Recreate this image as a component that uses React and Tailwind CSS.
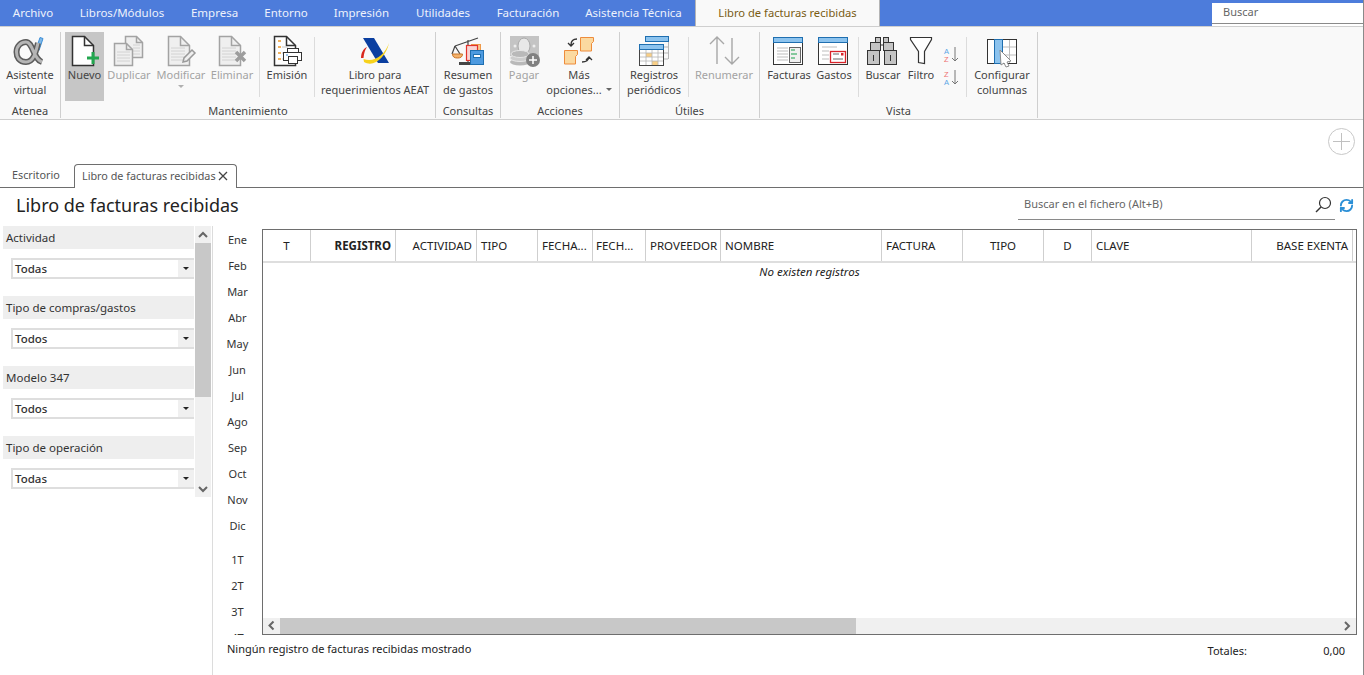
import { RefreshCw } from "lucide-react";

const topTabs = [
  ["Archivo", "w-[66px]"],
  ["Libros/Módulos", "w-[112px]"],
  ["Empresa", "w-[73px]"],
  ["Entorno", "w-[70px]"],
  ["Impresión", "w-[81px]"],
  ["Utilidades", "w-[82px]"],
  ["Facturación", "w-[88px]"],
  ["Asistencia Técnica", "w-[123px]"],
];

const filters = [
  ["Actividad", "Todas"],
  ["Tipo de compras/gastos", "Todos"],
  ["Modelo 347", "Todos"],
  ["Tipo de operación", "Todas"],
];

const months = ["Ene", "Feb", "Mar", "Abr", "May", "Jun", "Jul", "Ago", "Sep", "Oct", "Nov", "Dic"];
const quarters = ["1T", "2T", "3T", "4T"];

const columns = [
  ["T", "w-[48px] justify-center"],
  ["REGISTRO", "w-[85px] justify-end pr-[4px] font-bold"],
  ["ACTIVIDAD", "w-[81px] justify-end pr-[4px]"],
  ["TIPO", "w-[61px] pl-[4px]"],
  ["FECHA...", "w-[55px] pl-[4px]"],
  ["FECH...", "w-[53px] pl-[3px]"],
  ["PROVEEDOR", "w-[75px] pl-[4px]"],
  ["NOMBRE", "w-[161px] pl-[4px]"],
  ["FACTURA", "w-[81px] pl-[4px]"],
  ["TIPO", "w-[81px] justify-center"],
  ["D", "w-[48px] justify-center"],
  ["CLAVE", "w-[160px] pl-[4px]"],
  ["BASE EXENTA", "w-[101px] justify-end pr-[4px]"],
];

// el svg usa coordenadas de pantalla, asi es mas facil colocar cada trazo
function Ico({ x, w, children }) {
  return (
    <svg width={w} height={36} viewBox={`${x} 32 ${w} 36`} className="block overflow-visible">
      {children}
    </svg>
  );
}

function Doc({ x, y, w, h, f = 9, stroke = "#a3a3a3", fill = "#efefef", sw = 1.5 }) {
  return (
    <>
      <path d={`M${x} ${y}H${x + w - f}L${x + w} ${y + f}V${y + h}H${x}Z`} fill={fill} stroke={stroke} strokeWidth={sw} />
      <path d={`M${x + w - f} ${y}V${y + f}H${x + w}`} fill="none" stroke={stroke} strokeWidth={sw} />
    </>
  );
}

function DocLines({ x, w, ys, color = "#d2d2d2" }) {
  return ys.map((y) => <path key={y} d={`M${x} ${y}h${w}`} stroke={color} strokeWidth="1" />);
}

function Caret({ color = "#b0b0b0" }) {
  return <div className="w-0 h-0 border-x-[3px] border-t-[3px] border-x-transparent" style={{ borderTopColor: color }} />;
}

function Btn({ w, lines, disabled, active, caret, sideCaret, children }) {
  return (
    <div className={`${w} h-[69px] shrink-0 flex flex-col items-center ${active ? "bg-[#c6c6c6]" : ""}`}>
      <div className="h-[35px] shrink-0">{children}</div>
      <div className={`text-center leading-[15px] whitespace-nowrap ${disabled ? "text-[#a3a3a3]" : "text-[#444]"}`}>
        {lines.map((l, i) => (
          <div key={l} className="flex items-center justify-center gap-[4px]">
            {l}
            {sideCaret && i === lines.length - 1 && <Caret color="#666" />}
          </div>
        ))}
        {caret && (
          <div className="flex justify-center pt-[3px]">
            <Caret />
          </div>
        )}
      </div>
    </div>
  );
}

function Sep() {
  return <div className="w-px h-[60px] mt-[5px] bg-[#dcdcdc] shrink-0" />;
}

function Group({ w, label, children }) {
  return (
    <div className={`${w} shrink-0 flex flex-col`}>
      <div className="flex h-[69px] border-r border-[#cfcfcf]">{children}</div>
      <div className="h-[17px] border-r border-[#cfcfcf] flex items-center justify-center leading-none pt-[3px] pb-[1px] text-[#444]">
        {label}
      </div>
    </div>
  );
}

function Chevron({ up }) {
  return (
    <svg width="10" height="8" viewBox="0 0 10 8">
      <path d={up ? "M1 6l4-4 4 4" : "M1 2l4 4 4-4"} fill="none" stroke="#666" strokeWidth="2" />
    </svg>
  );
}

function Ribbon() {
  return (
    <div className="h-[94px] shrink-0 bg-[#f9f9f9] border-y border-[#cfcfcf] flex pt-[5px] text-[11px] text-[#444]">
      <Group w="w-[61px]" label="Atenea">
        <Btn w="w-[60px]" lines={["Asistente", "virtual"]}>
          <Ico x={0} w={60}>
            <path d="M40 37.500l3 1-4 12-3-1z" fill="#7fb9ea" stroke="#3d8fd8" strokeWidth="1" />
            <path d="M38 43C36 51 34 62 26 62 19 62 16.500 57 16.500 52 16.500 46 21 42 26 42 33 42 33 59 42 62" fill="none" stroke="#5c5c5c" strokeWidth="6" />
            <path d="M38 43C36 51 34 62 26 62 19 62 16.500 57 16.500 52 16.500 46 21 42 26 42 33 42 33 59 42 62" fill="none" stroke="#b5b5b5" strokeWidth="3" />
          </Ico>
        </Btn>
      </Group>

      <Group w="w-[375px]" label="Mantenimiento">
        <div className="w-[4px] shrink-0" />
        <Btn w="w-[39px]" lines={["Nuevo"]} active>
          <Ico x={65} w={39}>
            <Doc x={72.500} y={36.500} w={21} h={29} f={9} stroke="#333" fill="#fff" />
            <path d="M93 52v12M87 58h12" stroke="#22a64f" strokeWidth="3" />
          </Ico>
        </Btn>
        <Btn w="w-[50px]" lines={["Duplicar"]} disabled>
          <Ico x={104} w={50}>
            <Doc x={125.500} y={36.500} w={17} h={21} f={6} />
            <DocLines x={133} w={7} ys={[45, 48, 51, 54]} />
            <Doc x={114.500} y={43.500} w={18} h={22} f={6} />
            <DocLines x={117} w={13} ys={[52, 55, 58, 61]} />
          </Ico>
        </Btn>
        <Btn w="w-[54px]" lines={["Modificar"]} disabled caret>
          <Ico x={154} w={54}>
            <Doc x={168.500} y={36.500} w={21} h={29} />
            <DocLines x={171} w={14} ys={[48, 51, 54, 57, 60]} />
            <path d="M183 62l1-4 8-8 3 3-8 8z" fill="#efefef" stroke="#9a9a9a" strokeWidth="1.500" />
          </Ico>
        </Btn>
        <Btn w="w-[48px]" lines={["Eliminar"]} disabled>
          <Ico x={208} w={48}>
            <Doc x={219.500} y={36.500} w={21} h={29} />
            <DocLines x={222} w={14} ys={[48, 51, 54, 57, 60]} />
            <path d="M236 52l9 9M245 52l-9 9" stroke="#9d9d9d" strokeWidth="3.500" />
          </Ico>
        </Btn>
        <div className="w-[3px] shrink-0" />
        <Sep />
        <Btn w="w-[54px]" lines={["Emisión"]}>
          <Ico x={260} w={54}>
            <Doc x={274.500} y={36.500} w={21} h={29} stroke="#333" fill="#fff" />
            <path d="M278 41h3M278 47h3M278 53h3M278 59h3" stroke="#ee9a2b" strokeWidth="1.500" />
            <path d="M282 47h6M282 53h2M282 59h2" stroke="#c5c5c5" strokeWidth="1" />
            <rect x="287.500" y="48.500" width="11" height="5" fill="#fff" stroke="#333" />
            <rect x="283.500" y="52.500" width="18" height="8" fill="#fff" stroke="#333" />
            <rect x="288.500" y="56.500" width="9" height="7" fill="#fff" stroke="#333" />
            <path d="M286 55h2" stroke="#3d8fd8" />
          </Ico>
        </Btn>
        <Sep />
        <Btn w="w-[120px]" lines={["Libro para", "requerimientos AEAT"]}>
          <Ico x={315} w={120}>
            <path d="M363 38h11l15 25h-11z" fill="#0b3fa0" />
            <path d="M363.500 59C374 63 385 55 389 43 386 57 374 68 364 62z" fill="#f7d21c" />
            <path d="M361 58C361 53 363 49 367 47 365 50 364 53 363.500 58z" fill="#d9281e" />
          </Ico>
        </Btn>
      </Group>

      <Group w="w-[65px]" label="Consultas">
        <Btn w="w-[64px]" lines={["Resumen", "de gastos"]}>
          <Ico x={436} w={64}>
            <path d="M455 46l23-8M468 40v22M455 46l-3 8M455 46l5 8" fill="none" stroke="#444" strokeWidth="1.200" />
            <path d="M452.500 54h10c0 3-2 4-5 4s-5-1-5-4z" fill="#f4b26b" stroke="#c9762c" />
            <path d="M459 62h12v3h-12z" fill="#444" />
            <rect x="471.500" y="44.500" width="9" height="14" fill="#f9c98d" stroke="#ee9a4a" />
            <rect x="466.500" y="45.500" width="11" height="15" fill="#f9d3d3" stroke="#e2332b" strokeWidth="1.200" />
            <rect x="470.500" y="50.500" width="13" height="14" fill="#4d9ae0" stroke="#1f6fb0" />
            <rect x="473.500" y="54.500" width="7" height="3" fill="#fff" stroke="#1f6fb0" />
          </Ico>
        </Btn>
      </Group>

      <Group w="w-[119px]" label="Acciones">
        <Btn w="w-[46px]" lines={["Pagar"]} disabled>
          <Ico x={501} w={46}>
            <rect x="510" y="36" width="29" height="20" fill="#c4c4c4" />
            <ellipse cx="524" cy="46" rx="6" ry="8" fill="#e8e8e8" stroke="#a8a8a8" />
            <circle cx="515" cy="46" r="1.500" fill="#eee" />
            <circle cx="534" cy="46" r="1.500" fill="#eee" />
            <ellipse cx="520" cy="62" rx="10" ry="3.500" fill="#b9b9b9" />
            <ellipse cx="520" cy="58" rx="10" ry="3.500" fill="#cdcdcd" stroke="#e6e6e6" />
            <ellipse cx="520" cy="54" rx="9" ry="3.500" fill="#b9b9b9" stroke="#e6e6e6" />
            <circle cx="533" cy="60" r="7" fill="#808080" />
            <path d="M533 56v8M529 60h8" stroke="#fff" strokeWidth="1.500" />
          </Ico>
        </Btn>
        <Btn w="w-[64px]" lines={["Más", "opciones..."]} sideCaret>
          <Ico x={547} w={64}>
            <path d="M580.500 37.500h13v4l-2 2v7.500h-11z" fill="#fbd9a0" stroke="#ee8c3c" />
            <path d="M564.500 50.500h13v4l-2 2v7.500h-11z" fill="#fbd9a0" stroke="#ee8c3c" />
            <path d="M577 39c-4 0-6 2-6 6M568 43l3 3 3-3" fill="none" stroke="#333" strokeWidth="1.300" />
            <path d="M582 62c4 0 7-2 7-5M586 60l3-3 3 3" fill="none" stroke="#333" strokeWidth="1.300" />
          </Ico>
        </Btn>
        <div className="w-[8px] shrink-0" />
      </Group>

      <Group w="w-[140px]" label="Útiles">
        <Btn w="w-[68px]" lines={["Registros", "periódicos"]}>
          <Ico x={620} w={68}>
            <rect x="645.500" y="36.500" width="23" height="5" fill="#8cc3ee" stroke="#1f6fb0" />
            <path d="M668.500 42v17M663 47h5M663 53h5M663 59h5" stroke="#b5b5b5" fill="none" />
            <rect x="639.500" y="44.500" width="24" height="21" fill="#fff" stroke="#444" />
            <rect x="639.500" y="44.500" width="24" height="5" fill="#8cc3ee" stroke="#1f6fb0" />
            <rect x="646" y="53" width="6" height="4" fill="#f9cf86" />
            <rect x="652" y="61" width="6" height="4" fill="#f9cf86" />
            <path d="M646 50v15M652 50v15M658 50v15M640 53h23M640 57h23M640 61h23" stroke="#b5b5b5" strokeWidth="0.800" />
          </Ico>
        </Btn>
        <Sep />
        <Btn w="w-[70px]" lines={["Renumerar"]} disabled>
          <Ico x={689} w={70}>
            <path d="M717 37v27M710 44l7-7 7 7" fill="none" stroke="#a8a8a8" strokeWidth="1.400" />
            <path d="M732 38v26M725 57l7 7 7-7" fill="none" stroke="#a8a8a8" strokeWidth="1.400" />
          </Ico>
        </Btn>
      </Group>

      <Group w="w-[278px]" label="Vista">
        <div className="w-[7px] shrink-0" />
        <Btn w="w-[44px]" lines={["Facturas"]}>
          <Ico x={767} w={44}>
            <rect x="773.500" y="37.500" width="29" height="27" fill="#fff" stroke="#333" />
            <rect x="773.500" y="37.500" width="29" height="5" fill="#8cc3ee" stroke="#1f6fb0" />
            <path d="M777 48h11M777 51h11M777 54h11M777 57h11M777 60h11" stroke="#bdbdbd" />
            <rect x="789.500" y="47.500" width="11" height="15" fill="#f0f0f0" stroke="#666" />
            <path d="M791 50h4M791 54h6M791 58h4" stroke="#18a04a" />
          </Ico>
        </Btn>
        <Btn w="w-[46px]" lines={["Gastos"]}>
          <Ico x={811} w={46}>
            <rect x="818.500" y="37.500" width="29" height="27" fill="#fff" stroke="#333" />
            <rect x="818.500" y="37.500" width="29" height="5" fill="#8cc3ee" stroke="#1f6fb0" />
            <path d="M822 47h15M822 51h7M822 55h7M822 59h7" stroke="#bdbdbd" />
            <rect x="830.500" y="51.500" width="15" height="11" fill="#fff" stroke="#d8232a" strokeWidth="1.300" />
            <path d="M833 54h6M833 59h10" stroke="#666" />
            <rect x="841" y="53" width="2.500" height="2.500" fill="#d8232a" />
          </Ico>
        </Btn>
        <div className="w-px shrink-0" />
        <Sep />
        <Btn w="w-[48px]" lines={["Buscar"]}>
          <Ico x={859} w={48}>
            <rect x="875.500" y="37.500" width="5" height="5" fill="#c4c4c4" stroke="#333" />
            <rect x="883.500" y="37.500" width="5" height="5" fill="#c4c4c4" stroke="#333" />
            <rect x="870.500" y="42.500" width="10" height="8" fill="#c4c4c4" stroke="#333" />
            <rect x="883.500" y="42.500" width="10" height="8" fill="#c4c4c4" stroke="#333" />
            <rect x="867.500" y="50.500" width="12" height="14" fill="#c4c4c4" stroke="#333" />
            <rect x="884.500" y="50.500" width="12" height="14" fill="#c4c4c4" stroke="#333" />
            <path d="M880 45h4M873.500 55v6M890.500 55v6" stroke="#333" />
          </Ico>
        </Btn>
        <Btn w="w-[28px]" lines={["Filtro"]}>
          <Ico x={907} w={28}>
            <path d="M910.500 37.500h21v2l-7 12v12l-6-1v-11l-8-12z" fill="#fff" stroke="#333" strokeWidth="1.200" />
          </Ico>
        </Btn>
        <div className="w-[31px] shrink-0">
          <Ico x={935} w={31}>
            <g fontFamily="'Liberation Sans', sans-serif" fontSize="7.500">
              <text x="944" y="53.500" fill="#5aa7e6">A</text>
              <text x="944" y="62.300" fill="#ee6f6f">Z</text>
              <text x="944" y="76.500" fill="#ee6f6f">Z</text>
              <text x="944" y="85.300" fill="#5aa7e6">A</text>
            </g>
            <path d="M955 47v14M952 58l3 3 3-3" fill="none" stroke="#777" />
            <path d="M955 70v14M952 81l3 3 3-3" fill="none" stroke="#777" />
          </Ico>
        </div>
        <Sep />
        <Btn w="w-[70px]" lines={["Configurar", "columnas"]}>
          <Ico x={967} w={70}>
            <rect x="987.500" y="39.500" width="29" height="24" fill="#fff" stroke="#333" />
            <rect x="994.500" y="39.500" width="8" height="24" fill="#8cc3ee" stroke="#1f6fb0" />
            <path d="M1009.500 40v23M1003 47h13M1003 55h13" stroke="#bdbdbd" />
            <path d="M1000 50l11 11-4 1 2 4-3 1-2-4-3 2z" fill="#fff" stroke="#8a8a8a" />
          </Ico>
        </Btn>
      </Group>
    </div>
  );
}

function FilterPanel() {
  return (
    <div className="w-[213px] shrink-0 border-r border-[#dcdcdc] flex items-start pl-[3px]">
      <div className="w-[191px] h-[271px] overflow-hidden">
        {filters.map(([title, value]) => (
          <div key={title} className="h-[70px]">
            <div className="h-[23px] bg-[#eeeeee] flex items-center pl-[3px] text-[#333]">{title}</div>
            <div className="h-[21px] mt-[9px] ml-[8px] border-y-2 border-l-2 border-[#dedede] flex items-center">
              <span className="flex-1 pl-[2px] font-medium text-[#333]">{value}</span>
              <div className="w-[16px] h-full bg-[#f0f0f0] flex items-center justify-center">
                <Caret color="#222" />
              </div>
            </div>
          </div>
        ))}
      </div>
      <div className="w-[16px] h-[271px] ml-[1px] bg-[#f0f0f0] flex flex-col">
        <div className="h-[17px] flex items-center justify-center">
          <Chevron up />
        </div>
        <div className="h-[154px] bg-[#c8c8c8]" />
        <div className="flex-1 flex items-end justify-center pb-[4px]">
          <Chevron />
        </div>
      </div>
    </div>
  );
}

function Grid() {
  return (
    <div className="flex-1 mt-[3px] h-[406px] border border-[#6e6e6e] flex flex-col">
      <div className="h-[33px] shrink-0 flex border-b-2 border-[#dedede] text-[#222]">
        {columns.map(([name, cls], i) => (
          <div key={i} className={`${cls} shrink-0 flex items-center border-r border-[#cfcfcf] whitespace-nowrap`}>
            {name}
          </div>
        ))}
      </div>
      <div className="flex-1 text-center italic text-[#222]">No existen registros</div>
      <div className="h-[16px] shrink-0 bg-[#f0f0f0] flex items-center">
        <div className="w-[17px] flex justify-center -rotate-90">
          <Chevron up />
        </div>
        <div className="w-[576px] h-full bg-[#c8c8c8]" />
        <div className="flex-1 flex justify-end pr-[4px]">
          <div className="-rotate-90">
            <Chevron />
          </div>
        </div>
      </div>
    </div>
  );
}

export default function App() {
  return (
    <div className="h-[675px] overflow-hidden flex flex-col bg-white border-r border-[#8a8a8a] font-['Noto_Sans','Open_Sans',sans-serif] text-[11.5px] text-[#333]">
      <div className="h-[26px] shrink-0 bg-[#4d7cdb] flex text-[#eef2fb]">
        {topTabs.map(([name, w]) => (
          <div key={name} className={`${w} shrink-0 flex items-center justify-center whitespace-nowrap`}>
            {name}
          </div>
        ))}
        <div className="w-[185px] shrink-0 bg-[#f9f9f9] border-x border-[#b5b5b5] flex items-center justify-center text-[11.2px] text-[#7a5c14]">
          Libro de facturas recibidas
        </div>
        <div className="flex-1" />
        <div className="w-[151px] shrink-0 mt-[3px] bg-white">
          <div className="h-[21px] border-b border-[#8a8a8a] flex items-center pl-[11px] pb-[2px] text-[11px] text-[#666]">Buscar</div>
        </div>
      </div>

      <Ribbon />

      <div className="h-[44px] shrink-0 flex justify-end pt-[8px] pr-[8px]">
        <div className="w-[27px] h-[27px] rounded-full border border-[#c8c8c8] flex items-center justify-center">
          <svg width="17" height="17" viewBox="0 0 17 17">
            <path d="M8.500 0v17M0 8.500h17" stroke="#c0c0c0" />
          </svg>
        </div>
      </div>

      <div className="h-[24px] shrink-0 flex items-end border-b border-[#6e6e6e] text-[10.8px]">
        <div className="w-[74px] h-[23px] pl-[12px] flex items-center text-[#555]">Escritorio</div>
        <div className="w-[163px] h-[24px] -mb-px bg-white border border-b-0 border-[#6e6e6e] rounded-t-[4px] pl-[7px] pr-[8px] pb-[1px] flex items-center justify-between text-[#555]">
          <span className="whitespace-nowrap">Libro de facturas recibidas</span>
          <svg width="10" height="10" viewBox="0 0 10 10" className="shrink-0">
            <path d="M1 1l8 8M9 1l-8 8" stroke="#444" strokeWidth="1.300" />
          </svg>
        </div>
      </div>

      <div className="h-[38px] shrink-0 flex items-start">
        <h1 className="flex-1 pl-[16px] pt-[3px] text-[18px] leading-[28px] text-[#222]">Libro de facturas recibidas</h1>
        <div className="w-[317px] h-[32px] border-b border-[#8a8a8a] flex items-center justify-between pl-[6px] pr-[3px] pt-[2px] text-[11px] text-[#666]">
          <span>Buscar en el fichero (Alt+B)</span>
          <svg width="17" height="17" viewBox="0 0 17 17">
            <circle cx="10" cy="7" r="5.500" fill="none" stroke="#333" strokeWidth="1.200" />
            <path d="M6 11l-5 5" stroke="#333" strokeWidth="1.400" />
          </svg>
        </div>
        <div className="w-[28px] h-[32px] pt-[2px] pr-[6px] flex items-center justify-center">
          <RefreshCw size={15} strokeWidth={3} color="#2b8fd6" />
        </div>
      </div>

      <div className="flex-1 flex min-h-0">
        <FilterPanel />
        <div className="flex-1 flex flex-col min-w-0">
          <div className="h-[409px] shrink-0 flex pr-[6px] overflow-hidden">
            <div className="w-[49px] shrink-0 flex flex-col items-center text-[11px] text-[#333]">
              <div className="h-px shrink-0" />
              {months.map((m) => (
                <div key={m} className="h-[26px] shrink-0 flex items-center">
                  {m}
                </div>
              ))}
              <div className="h-[8px] shrink-0" />
              {quarters.map((q) => (
                <div key={q} className="h-[26px] shrink-0 flex items-center">
                  {q}
                </div>
              ))}
            </div>
            <Grid />
          </div>
          <div className="flex justify-between pl-[14px] pr-[18px] pt-[6px] text-[11px] text-[#222]">
            <span>Ningún registro de facturas recibidas mostrado</span>
            <div className="flex pt-[2px]">
              <span>Totales:</span>
              <span className="w-[98px] text-right">0,00</span>
            </div>
          </div>
        </div>
      </div>
    </div>
  );
}
